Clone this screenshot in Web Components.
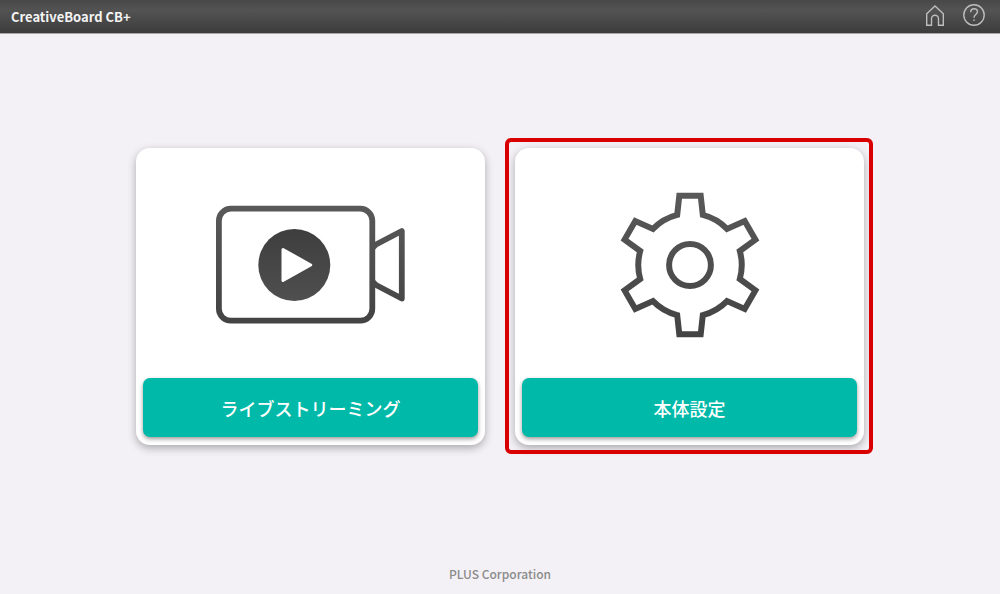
<!DOCTYPE html>
<html lang="ja">
<head>
<meta charset="UTF-8">
<meta name="viewport" content="width=device-width, initial-scale=1.0">
<title>CreativeBoard CB+</title>
<style>
    body {
        margin: 0;
        background-color: #f3f1f5;
        font-family: "Noto Sans CJK JP", "Noto Sans", sans-serif;
        font-weight: 500;
    }
</style>
</head>
<body>
<board-app>
    <board-header slot="header">CreativeBoard CB+</board-header>
    <menu-card label="ライブストリーミング">
        <camera-icon></camera-icon>
    </menu-card>
    <menu-card label="本体設定" selected>
        <gear-icon></gear-icon>
    </menu-card>
    <board-footer slot="footer">PLUS Corporation</board-footer>
</board-app>

<script>
class BoardApp extends HTMLElement {
    connectedCallback() {
        this.attachShadow({ mode: 'open' });
        this.shadowRoot.innerHTML = `
            <style>
                :host {
                    display: flex;
                    flex-direction: column;
                    min-height: 100vh;
                }
                main {
                    flex: 1;
                    display: flex;
                    flex-wrap: wrap;
                    justify-content: center;
                    align-items: center;
                    gap: 30px;
                }
            </style>
            <slot name="header"></slot>
            <main><slot></slot></main>
            <slot name="footer"></slot>
        `;
    }
}
customElements.define('board-app', BoardApp);

class BoardHeader extends HTMLElement {
    connectedCallback() {
        this.attachShadow({ mode: 'open' });
        this.shadowRoot.innerHTML = `
            <style>
                :host {
                    display: block;
                    color: #f4f4f4;
                    background: linear-gradient(#484848, #535353 30%, #3b3b3b);
                }
                header {
                    display: flex;
                    justify-content: space-between;
                    align-items: center;
                    height: 33px;
                    padding: 0 14px 0 11px;
                    border-bottom: 1px solid #a9a7aa;
                }
                h1 {
                    margin: 0;
                    font-size: 13px;
                    font-weight: 700;
                    line-height: 20px;
                }
                nav {
                    display: flex;
                    gap: 15px;
                    padding-bottom: 3px;
                }
                a {
                    display: block;
                    height: 24px;
                }
                svg {
                    display: block;
                    fill: none;
                    stroke: #bdbdbd;
                    stroke-width: 1.4;
                }
            </style>
            <header>
                <h1><slot></slot></h1>
                <nav>
                    <a href="#home" aria-label="ホーム">
                        <svg width="24" height="24" viewBox="0 0 24 24">
                            <path d="M3.7 10.8 12 3l8.3 7.8v11.5h-4.8v-6.5a3.5 3.5 0 0 0-7 0v6.5H3.7z"/>
                        </svg>
                    </a>
                    <a href="#help" aria-label="ヘルプ">
                        <svg width="24" height="24" viewBox="0 0 24 24">
                            <circle cx="12" cy="12" r="10.2"/>
                            <path d="M8.7 9.2c0-2.1 1.4-3.5 3.4-3.5 1.9 0 3.3 1.2 3.3 3 0 2.9-3.4 2.8-3.4 6M12 16.4v1.7"/>
                        </svg>
                    </a>
                </nav>
            </header>
        `;
    }
}
customElements.define('board-header', BoardHeader);

class MenuCard extends HTMLElement {
    connectedCallback() {
        this.attachShadow({ mode: 'open' });
        this.shadowRoot.innerHTML = `
            <style>
                :host {
                    display: block;
                    box-sizing: border-box;
                    position: relative;
                    width: 349px;
                    padding: 0 7px 8px;
                    border-radius: 14px;
                    background-color: #fff;
                    box-shadow: 0 3px 8px rgba(0, 0, 0, 0.3);
                }
                /* red frame around the highlighted card */
                :host([selected])::after {
                    content: "";
                    position: absolute;
                    inset: -10px -9px -9px -10px;
                    border: 4px solid #d90000;
                    border-radius: 6px;
                    pointer-events: none;
                }
                .picture {
                    display: flex;
                    justify-content: center;
                    padding: 42px 0 38px;
                }
                button {
                    display: block;
                    width: 100%;
                    height: 59px;
                    padding: 0;
                    border: 0;
                    border-radius: 7px;
                    background-color: #00b9a8;
                    box-shadow: 0 2px 4px rgba(0, 0, 0, 0.4);
                    color: #fff;
                    font: inherit;
                    font-size: 18px;
                    line-height: 26px;
                    cursor: pointer;
                }
            </style>
            <div class="picture"><slot></slot></div>
            <button type="button">${this.getAttribute('label')}</button>
        `;
    }
}
customElements.define('menu-card', MenuCard);

class CameraIcon extends HTMLElement {
    connectedCallback() {
        this.attachShadow({ mode: 'open' });
        this.shadowRoot.innerHTML = `
            <style>
                :host { display: block; }
                svg { display: block; }
            </style>
            <svg width="220" height="150" viewBox="0 0 220 150" aria-hidden="true">
                <defs>
                    <linearGradient id="shade" gradientUnits="userSpaceOnUse" x1="0" y1="15" x2="0" y2="135">
                        <stop offset="0" stop-color="#595959"/>
                        <stop offset="1" stop-color="#434343"/>
                    </linearGradient>
                    <linearGradient id="disc" x1="0" y1="0" x2="0" y2="1">
                        <stop offset="0" stop-color="#3e3e3e"/>
                        <stop offset="1" stop-color="#4f4f4f"/>
                    </linearGradient>
                </defs>
                <g fill="none" stroke="url(#shade)" stroke-width="5.8" stroke-linejoin="round">
                    <path d="M172 57.500 175 54.500 200.8 41v67.5L175 95 172 92"/>
                    <rect x="17.9" y="18.7" width="153.4" height="112" rx="12"/>
                </g>
                <circle cx="93.3" cy="75" r="36" fill="url(#disc)"/>
                <path d="M82 59.5 109.7 75 82 90.5z" fill="#fff" stroke="#fff" stroke-width="3" stroke-linejoin="round"/>
            </svg>
        `;
    }
}
customElements.define('camera-icon', CameraIcon);

class GearIcon extends HTMLElement {
    connectedCallback() {
        this.attachShadow({ mode: 'open' });
        this.shadowRoot.innerHTML = `
            <style>
                :host { display: block; }
                svg { display: block; }
            </style>
            <svg width="220" height="150" viewBox="-110 -75 220 150" aria-hidden="true">
                <defs>
                    <linearGradient id="shade" gradientUnits="userSpaceOnUse" x1="0" y1="-72" x2="0" y2="72">
                        <stop offset="0" stop-color="#595959"/>
                        <stop offset="1" stop-color="#434343"/>
                    </linearGradient>
                </defs>
                <g fill="none" stroke="url(#shade)" stroke-width="6">
                    <path d="M-12.8-50.1-10.7-69.3H10.7L12.8-50.1A51.7 51.7 0 0 1 37-36.1L54.7-43.9 65.4-25.4 49.8-14A51.7 51.7 0 0 1 49.8 14L65.4 25.4 54.7 43.9 37 36.1A51.7 51.7 0 0 1 12.8 50.1L10.7 69.3H-10.7L-12.8 50.1A51.7 51.7 0 0 1-37 36.1L-54.7 43.9-65.4 25.4-49.8 14A51.7 51.7 0 0 1-49.8-14L-65.4-25.4-54.7-43.9-37-36.1A51.7 51.7 0 0 1-12.8-50.1z"/>
                    <circle r="20.9"/>
                </g>
            </svg>
        `;
    }
}
customElements.define('gear-icon', GearIcon);

class BoardFooter extends HTMLElement {
    connectedCallback() {
        this.attachShadow({ mode: 'open' });
        this.shadowRoot.innerHTML = `
            <style>
                :host {
                    display: block;
                    padding: 5px 0 10px;
                    color: #8b8b8b;
                    font-size: 12px;
                    line-height: 20px;
                    text-align: center;
                }
            </style>
            <footer><slot></slot></footer>
        `;
    }
}
customElements.define('board-footer', BoardFooter);
</script>
</body>
</html>
